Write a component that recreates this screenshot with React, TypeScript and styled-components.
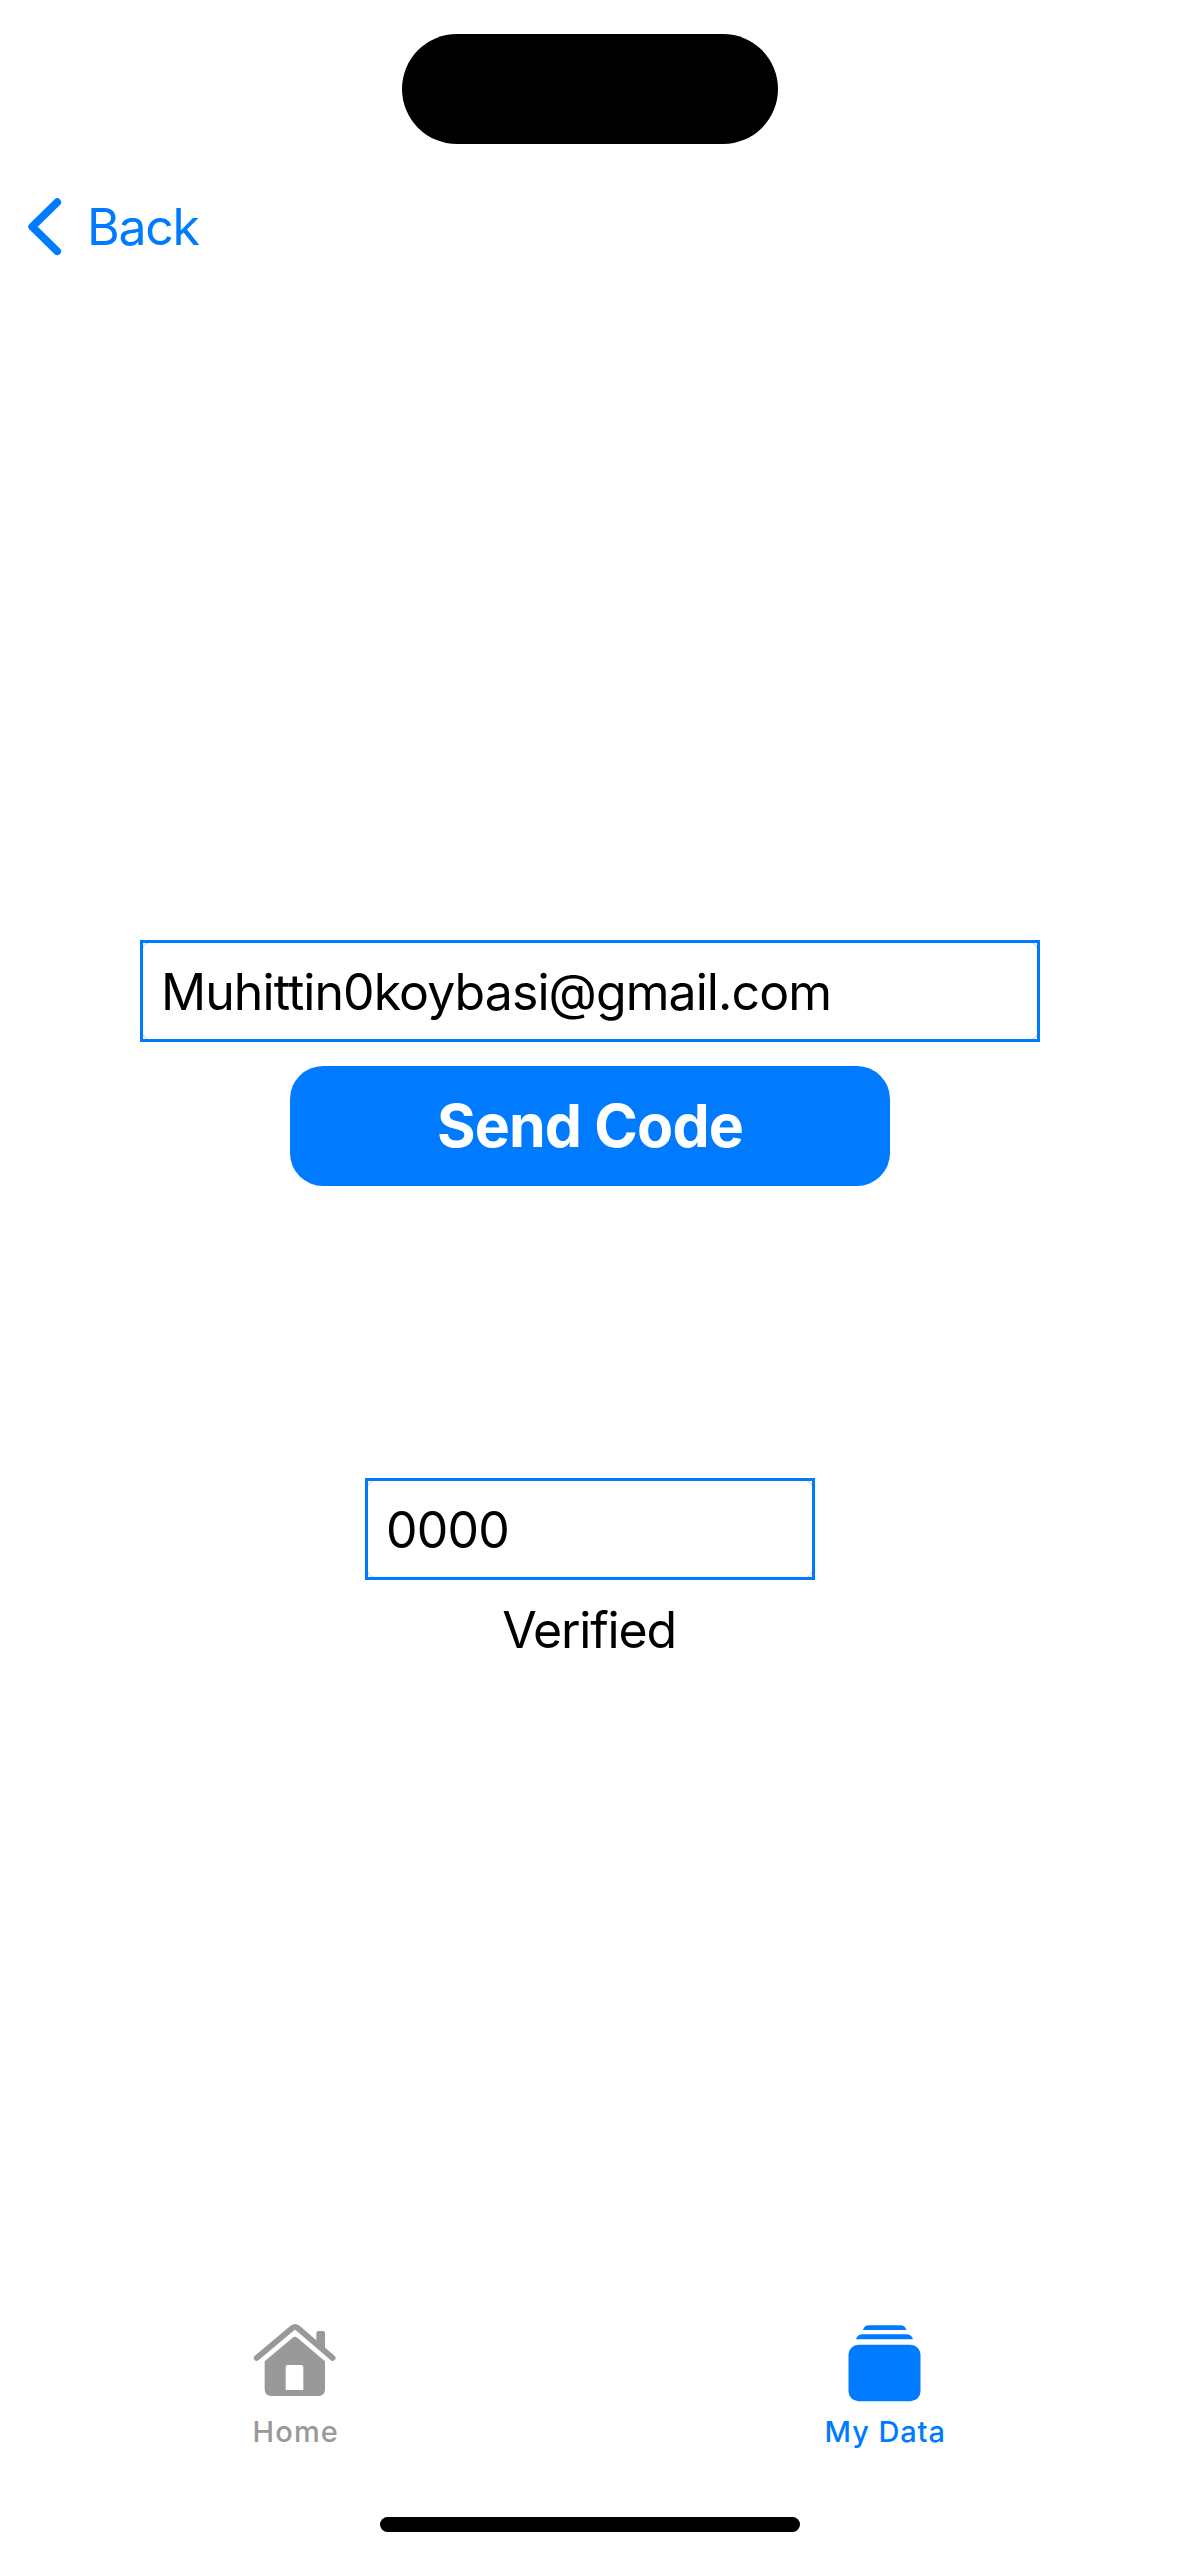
import React from "react";
import styled, { createGlobalStyle } from "styled-components";

const BLUE = "#007aff";
const GRAY = "#999999";

const GlobalStyle = createGlobalStyle`
  * { box-sizing: border-box; }
  body { margin: 0; background: #ffffff; }
`;

const Screen = styled.div`
  width: 1179px;
  height: 2556px;
  display: flex;
  flex-direction: column;
  background: #ffffff;
  color: #000000;
  font-family: Inter, "Liberation Sans", sans-serif;
  overflow: hidden;
`;

const StatusArea = styled.div`
  height: 161px;
  flex: none;
  display: flex;
  justify-content: center;
  align-items: flex-start;
  padding-top: 34px;
`;

const Island = styled.div`
  width: 376px;
  height: 110px;
  border-radius: 55px;
  background: #000000;
`;

const NavBar = styled.nav`
  height: 132px;
  flex: none;
  display: flex;
  align-items: center;
  padding-left: 27px;
`;

const BackButton = styled.button`
  display: flex;
  align-items: center;
  gap: 24px;
  padding: 0;
  border: 0;
  background: none;
  color: ${BLUE};
  font: 400 50px/60px Inter, "Liberation Sans", sans-serif;
  letter-spacing: -1.3px;
`;

const Main = styled.main`
  flex: 1;
  display: flex;
  flex-direction: column;
  align-items: center;
  padding: 647px 0 0 1px;
`;

const Field = styled.label<{ $width: number }>`
  position: relative;
  display: flex;
  width: ${(p) => p.$width}px;
  height: 102px;
  flex: none;

  &::after {
    content: "";
    position: absolute;
    inset: 0;
    border: 3px solid ${BLUE};
    pointer-events: none;
  }
`;

const Input = styled.input<{ $tracking: number }>`
  flex: 1;
  min-width: 0;
  margin: 0;
  padding: 2px 20px 0;
  border: 1px solid #cccccc;
  border-radius: 15px;
  outline: none;
  background: #ffffff;
  color: #000000;
  font: 400 50px/60px Inter, "Liberation Sans", sans-serif;
  letter-spacing: ${(p) => p.$tracking}px;
`;

const SendButton = styled.button`
  width: 600px;
  height: 120px;
  flex: none;
  margin: 24px 0 292px;
  padding: 0;
  border: 0;
  border-radius: 33px;
  background: ${BLUE};
  color: #ffffff;
  font: 700 59px/72px Inter, "Liberation Sans", sans-serif;
  letter-spacing: -0.86px;
`;

const Status = styled.p`
  margin: 20px 0 0;
  padding-right: 2px;
  font-size: 50px;
  line-height: 60px;
  letter-spacing: -1.2px;
`;

const TabBar = styled.nav`
  height: 195px;
  flex: none;
  display: grid;
  grid-template-columns: 1fr 1fr;
`;

const Tab = styled.button<{ $active?: boolean; $tracking: number }>`
  display: flex;
  flex-direction: column;
  align-items: center;
  gap: 11px;
  padding: 0;
  border: 0;
  background: none;
  color: ${(p) => (p.$active ? BLUE : GRAY)};
  font: 500 29px/37px Inter, "Liberation Sans", sans-serif;
  letter-spacing: ${(p) => p.$tracking}px;
`;

const TabLabel = styled.span`
  padding-left: 2px;
`;

const HomeIndicator = styled.div`
  width: 420px;
  height: 15px;
  flex: none;
  align-self: center;
  margin: 0 0 24px 1px;
  border-radius: 8px;
  background: #000000;
`;

const ChevronIcon = () => (
  <svg width="36" height="60" viewBox="0 0 36 60" fill="none">
    <path
      d="M30.2 5.2L5.2 29.8L30.2 54.2"
      stroke="currentColor"
      strokeWidth="7.8"
      strokeLinecap="round"
      strokeLinejoin="round"
    />
  </svg>
);

const HouseIcon = () => (
  <svg width="84" height="80" viewBox="69 66 252 240">
    <path
      d="M80 174L187 84Q195 77 203 84L308 174"
      fill="none"
      stroke="currentColor"
      strokeWidth="17"
      strokeLinecap="round"
      strokeLinejoin="round"
    />
    <path fill="currentColor" d="M259 136V99Q259 93 265 93H279Q285 93 285 99V158Z" />
    <path
      fill="currentColor"
      fillRule="evenodd"
      d="M104 184L188 113Q195 108 202 113L285 184V268Q285 288 265 288H124Q104 288 104 268ZM167 270H220V201Q220 195 214 195H173Q167 195 167 201Z"
    />
  </svg>
);

const StackIcon = () => (
  <svg width="73" height="80" viewBox="114 66 219 240" fill="currentColor">
    <path d="M159 90Q162 76 177 76H271Q286 76 289 90Z" />
    <path d="M138 118Q142 103 159 103H288Q305 103 309 118Z" />
    <rect x="115.5" y="134.5" width="216" height="169" rx="30" />
  </svg>
);

export default function App() {
  return (
    <Screen>
      <GlobalStyle />
      <StatusArea>
        <Island />
      </StatusArea>
      <NavBar>
        <BackButton>
          <ChevronIcon />
          Back
        </BackButton>
      </NavBar>
      <Main>
        <Field $width={900}>
          <Input $tracking={-0.93} defaultValue="Muhittin0koybasi@gmail.com" />
        </Field>
        <SendButton>Send Code</SendButton>
        <Field $width={450}>
          <Input $tracking={-0.8} defaultValue="0000" />
        </Field>
        <Status>Verified</Status>
      </Main>
      <TabBar>
        <Tab $tracking={1.1}>
          <HouseIcon />
          <TabLabel>Home</TabLabel>
        </Tab>
        <Tab $active $tracking={0.9}>
          <StackIcon />
          <TabLabel>My Data</TabLabel>
        </Tab>
      </TabBar>
      <HomeIndicator />
    </Screen>
  );
}
